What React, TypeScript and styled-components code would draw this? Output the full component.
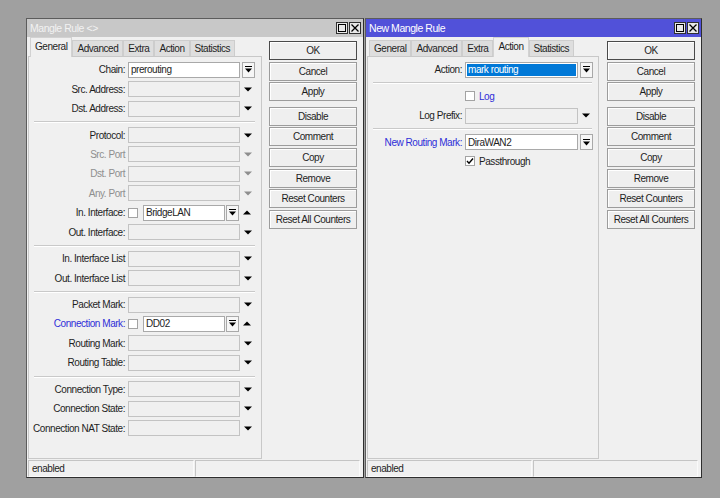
import React from "react";
import styled, { createGlobalStyle } from "styled-components";

const GlobalStyle = createGlobalStyle`
  html, body { margin: 0; padding: 0; }
  body { background: #a0a0a0; font-family: "Liberation Sans", Arial, sans-serif; }
`;

type Tone = "normal" | "dim" | "blue";

const toneColor = (t?: Tone) =>
  t === "dim" ? "#8e8e8e" : t === "blue" ? "#2e2ed8" : "#1e1e1e";

const Desktop = styled.div`
  width: 720px;
  height: 498px;
  box-sizing: border-box;
  padding: 18px 0 0 26px;
  display: flex;
  align-items: flex-start;
  gap: 1px;
  background: #a0a0a0;
  overflow: hidden;
  font-size: 10px;
  letter-spacing: -0.45px;
  color: #1e1e1e;
`;

const Win = styled.div<{ $w: number }>`
  width: ${(p) => p.$w}px;
  box-sizing: border-box;
  border: 1px solid #5c5c5c;
  border-right-color: #2e2e2e;
  border-bottom-color: #2e2e2e;
  background: #f0f0f0;
  display: flex;
  flex-direction: column;
`;

const TitleBar = styled.div<{ $active?: boolean }>`
  height: 18px;
  display: flex;
  align-items: center;
  padding: 0 2px 0 3px;
  background: ${(p) => (p.$active ? "#5151d9" : "#c8c8c8")};
  color: ${(p) => (p.$active ? "#ffffff" : "#f2f2f2")};
  font-size: 10.5px;
`;

const TitleText = styled.div`
  flex: 1;
  white-space: nowrap;
`;

const TitleButtons = styled.div`
  display: flex;
  gap: 1px;
`;

const TitleBtn = styled.div`
  width: 12px;
  height: 12px;
  box-sizing: border-box;
  border: 1px solid #303030;
  background: #e8e8e8;
  display: flex;
  align-items: center;
  justify-content: center;
`;

const Body = styled.div<{ $gap: number }>`
  display: flex;
  padding: 0 6px 0 1px;
  gap: ${(p) => p.$gap}px;
`;

const MainCol = styled.div<{ $w: number }>`
  width: ${(p) => p.$w}px;
  display: flex;
  flex-direction: column;
`;

const TabStrip = styled.div`
  height: 19px;
  display: flex;
  align-items: flex-end;
  padding-left: 2px;
  position: relative;
  z-index: 1;
`;

const Tab = styled.div<{ $active?: boolean }>`
  height: ${(p) => (p.$active ? 20 : 16)}px;
  margin-bottom: ${(p) => (p.$active ? -1 : 0)}px;
  box-sizing: border-box;
  padding: ${(p) => (p.$active ? "0 4px 2px" : "0 4px")};
  display: flex;
  align-items: center;
  white-space: nowrap;
  border: 1px solid ${(p) => (p.$active ? "#d2d2d2" : "#cdcdcd")};
  border-bottom: none;
  background: ${(p) => (p.$active ? "#f0f0f0" : "#dedede")};
`;

const Panel = styled.div`
  height: 403px;
  box-sizing: border-box;
  border: 1px solid #c8c8c8;
  padding-top: 3px;
`;

const Separator = styled.div`
  height: 2px;
  box-sizing: border-box;
  margin: 3px 6px 2px 5px;
  border-top: 1px solid #c9c9c9;
  border-bottom: 1px solid #ffffff;
`;

const Row = styled.div`
  height: 19.45px;
  display: flex;
  align-items: center;
`;

const Label = styled.div<{ $w: number; $tone?: Tone }>`
  width: ${(p) => p.$w}px;
  flex: none;
  text-align: right;
  white-space: nowrap;
  color: ${(p) => toneColor(p.$tone)};
`;

const Controls = styled.div`
  margin-left: 3px;
  display: flex;
  align-items: center;
`;

const TextBox = styled.div<{ $w: number; $filled?: boolean; $selected?: boolean; $indent?: number }>`
  width: ${(p) => p.$w}px;
  height: 16px;
  margin-left: ${(p) => p.$indent ?? 0}px;
  box-sizing: border-box;
  border: 1px solid ${(p) => (p.$filled ? "#a9a9a9" : "#c3c3c3")};
  background: ${(p) => (p.$selected ? "#0078d7" : p.$filled ? "#ffffff" : "#f0f0f0")};
  color: ${(p) => (p.$selected ? "#ffffff" : "#1e1e1e")};
  box-shadow: ${(p) => (p.$selected ? "inset 0 0 0 1px #ffffff" : "none")};
  padding: 0 2px;
  display: flex;
  align-items: center;
  white-space: nowrap;
  overflow: hidden;
`;

const ComboBtn = styled.div<{ $gap: number }>`
  width: 13px;
  height: 16px;
  margin-left: ${(p) => p.$gap}px;
  box-sizing: border-box;
  border: 1px solid #a9a9a9;
  background: #f6f6f6;
  display: flex;
  align-items: center;
  justify-content: center;
`;

const ArrowSlot = styled.div`
  width: 16px;
  display: flex;
  justify-content: center;
  align-items: center;
`;

const Check = styled.div`
  width: 10px;
  height: 10px;
  box-sizing: border-box;
  border: 1px solid #a3a3a3;
  background: #ffffff;
  display: flex;
  align-items: center;
  justify-content: center;
`;

const CheckText = styled.span<{ $tone?: Tone }>`
  margin-left: 4px;
  color: ${(p) => toneColor(p.$tone)};
`;

const ButtonCol = styled.div`
  width: 88px;
  padding-top: 4px;
  display: flex;
  flex-direction: column;
  gap: 1.67px;
`;

const Btn = styled.div<{ $primary?: boolean; $groupStart?: boolean }>`
  height: 19px;
  box-sizing: border-box;
  margin-top: ${(p) => (p.$groupStart ? 3.7 : 0)}px;
  border: 1px solid ${(p) => (p.$primary ? "#4a4a4a" : "#9c9c9c")};
  background: #efefef;
  box-shadow: inset 1px 1px 0 #ffffff;
  display: flex;
  align-items: center;
  justify-content: center;
  white-space: nowrap;
`;

const StatusBar = styled.div`
  margin-top: 1px;
  height: 17px;
  display: flex;
  gap: 1px;
  padding: 0 3px 0 1px;
`;

const StatusCell = styled.div`
  flex: 1;
  box-sizing: border-box;
  border: 1px solid #c4c4c4;
  border-right-color: #fafafa;
  border-bottom-color: #fafafa;
  padding-left: 3px;
  display: flex;
  align-items: center;
`;

const ComboGlyph = () => (
  <svg width="7" height="7" viewBox="0 0 7 7">
    <rect x="0" y="0" width="7" height="1" fill="#000" />
    <path d="M0 2.5H7L3.5 6.5Z" fill="#000" />
  </svg>
);

const Tri = ({ up, dim }: { up?: boolean; dim?: boolean }) => (
  <svg width="8" height="5" viewBox="0 0 8 5">
    <path d={up ? "M0 4.5H8L4 0.5Z" : "M0 0.5H8L4 4.5Z"} fill={dim ? "#8e8e8e" : "#000"} />
  </svg>
);

const Tick = () => (
  <svg width="8" height="8" viewBox="0 0 8 8">
    <path d="M1 4L3 6.2L7 1.5" stroke="#000" strokeWidth="1.4" fill="none" />
  </svg>
);

const MaxIcon = () => (
  <svg width="8" height="8" viewBox="0 0 8 8">
    <rect x="0.5" y="0.5" width="7" height="7" fill="none" stroke="#000" />
  </svg>
);

const CloseIcon = () => (
  <svg width="8" height="8" viewBox="0 0 8 8">
    <path d="M0.5 0.5L7.5 7.5M7.5 0.5L0.5 7.5" stroke="#000" strokeWidth="1.3" />
  </svg>
);

type Field =
  | { kind: "empty"; label: string; tone?: Tone }
  | { kind: "combo"; label: string; value: string; tone?: Tone; selected?: boolean }
  | { kind: "toggle"; label: string; value: string; tone?: Tone }
  | { kind: "check"; text: string; checked?: boolean; tone?: Tone };

const FormRow = ({ f, labelW, inputW }: { f: Field; labelW: number; inputW: number }) => {
  if (f.kind === "check") {
    return (
      <Row>
        <Label $w={labelW} />
        <Controls>
          <Check>{f.checked && <Tick />}</Check>
          <CheckText $tone={f.tone}>{f.text}</CheckText>
        </Controls>
      </Row>
    );
  }
  return (
    <Row>
      <Label $w={labelW} $tone={f.tone}>
        {f.label}
      </Label>
      <Controls>
        {f.kind === "empty" && (
          <>
            <TextBox $w={inputW} />
            <ArrowSlot>
              <Tri dim={f.tone === "dim"} />
            </ArrowSlot>
          </>
        )}
        {f.kind === "combo" && (
          <>
            <TextBox $w={inputW} $filled $selected={f.selected}>
              {f.value}
            </TextBox>
            <ComboBtn $gap={2}>
              <ComboGlyph />
            </ComboBtn>
          </>
        )}
        {f.kind === "toggle" && (
          <>
            <Check />
            <TextBox $w={inputW - 30} $filled $indent={5}>
              {f.value}
            </TextBox>
            <ComboBtn $gap={1}>
              <ComboGlyph />
            </ComboBtn>
            <ArrowSlot>
              <Tri up />
            </ArrowSlot>
          </>
        )}
      </Controls>
    </Row>
  );
};

const generalSections: Field[][] = [
  [
    { kind: "combo", label: "Chain:", value: "prerouting" },
    { kind: "empty", label: "Src. Address:" },
    { kind: "empty", label: "Dst. Address:" },
  ],
  [
    { kind: "empty", label: "Protocol:" },
    { kind: "empty", label: "Src. Port", tone: "dim" },
    { kind: "empty", label: "Dst. Port", tone: "dim" },
    { kind: "empty", label: "Any. Port", tone: "dim" },
    { kind: "toggle", label: "In. Interface:", value: "BridgeLAN" },
    { kind: "empty", label: "Out. Interface:" },
  ],
  [
    { kind: "empty", label: "In. Interface List" },
    { kind: "empty", label: "Out. Interface List" },
  ],
  [
    { kind: "empty", label: "Packet Mark:" },
    { kind: "toggle", label: "Connection Mark:", value: "DD02", tone: "blue" },
    { kind: "empty", label: "Routing Mark:" },
    { kind: "empty", label: "Routing Table:" },
  ],
  [
    { kind: "empty", label: "Connection Type:" },
    { kind: "empty", label: "Connection State:" },
    { kind: "empty", label: "Connection NAT State:" },
  ],
];

const actionSections: Field[][] = [
  [{ kind: "combo", label: "Action:", value: "mark routing", selected: true }],
  [
    { kind: "check", text: "Log", tone: "blue" },
    { kind: "empty", label: "Log Prefix:" },
  ],
  [
    { kind: "combo", label: "New Routing Mark:", value: "DiraWAN2", tone: "blue" },
    { kind: "check", text: "Passthrough", checked: true },
  ],
];

const tabs = ["General", "Advanced", "Extra", "Action", "Statistics"];
const buttons = [
  "OK",
  "Cancel",
  "Apply",
  "Disable",
  "Comment",
  "Copy",
  "Remove",
  "Reset Counters",
  "Reset All Counters",
];

interface RuleWindowProps {
  title: string;
  active?: boolean;
  width: number;
  panelW: number;
  gap: number;
  labelW: number;
  inputW: number;
  activeTab: string;
  sections: Field[][];
}

const RuleWindow = (props: RuleWindowProps) => (
  <Win $w={props.width}>
    <TitleBar $active={props.active}>
      <TitleText>{props.title}</TitleText>
      <TitleButtons>
        <TitleBtn>
          <MaxIcon />
        </TitleBtn>
        <TitleBtn>
          <CloseIcon />
        </TitleBtn>
      </TitleButtons>
    </TitleBar>
    <Body $gap={props.gap}>
      <MainCol $w={props.panelW}>
        <TabStrip>
          {tabs.map((t) => (
            <Tab key={t} $active={t === props.activeTab}>
              {t}
            </Tab>
          ))}
        </TabStrip>
        <Panel>
          {props.sections.map((sec, i) => (
            <React.Fragment key={i}>
              {i > 0 && <Separator />}
              {sec.map((f, j) => (
                <FormRow key={j} f={f} labelW={props.labelW} inputW={props.inputW} />
              ))}
            </React.Fragment>
          ))}
        </Panel>
      </MainCol>
      <ButtonCol>
        {buttons.map((b, i) => (
          <Btn key={b} $primary={i === 0} $groupStart={b === "Disable"}>
            {b}
          </Btn>
        ))}
      </ButtonCol>
    </Body>
    <StatusBar>
      <StatusCell>enabled</StatusCell>
      <StatusCell />
    </StatusBar>
  </Win>
);

export default function App() {
  return (
    <>
      <GlobalStyle />
      <Desktop>
        <RuleWindow
          title="Mangle Rule <>"
          width={338}
          panelW={234}
          gap={7}
          labelW={96}
          inputW={112}
          activeTab="General"
          sections={generalSections}
        />
        <RuleWindow
          title="New Mangle Rule"
          active
          width={337}
          panelW={232}
          gap={8}
          labelW={94}
          inputW={113}
          activeTab="Action"
          sections={actionSections}
        />
      </Desktop>
    </>
  );
}
